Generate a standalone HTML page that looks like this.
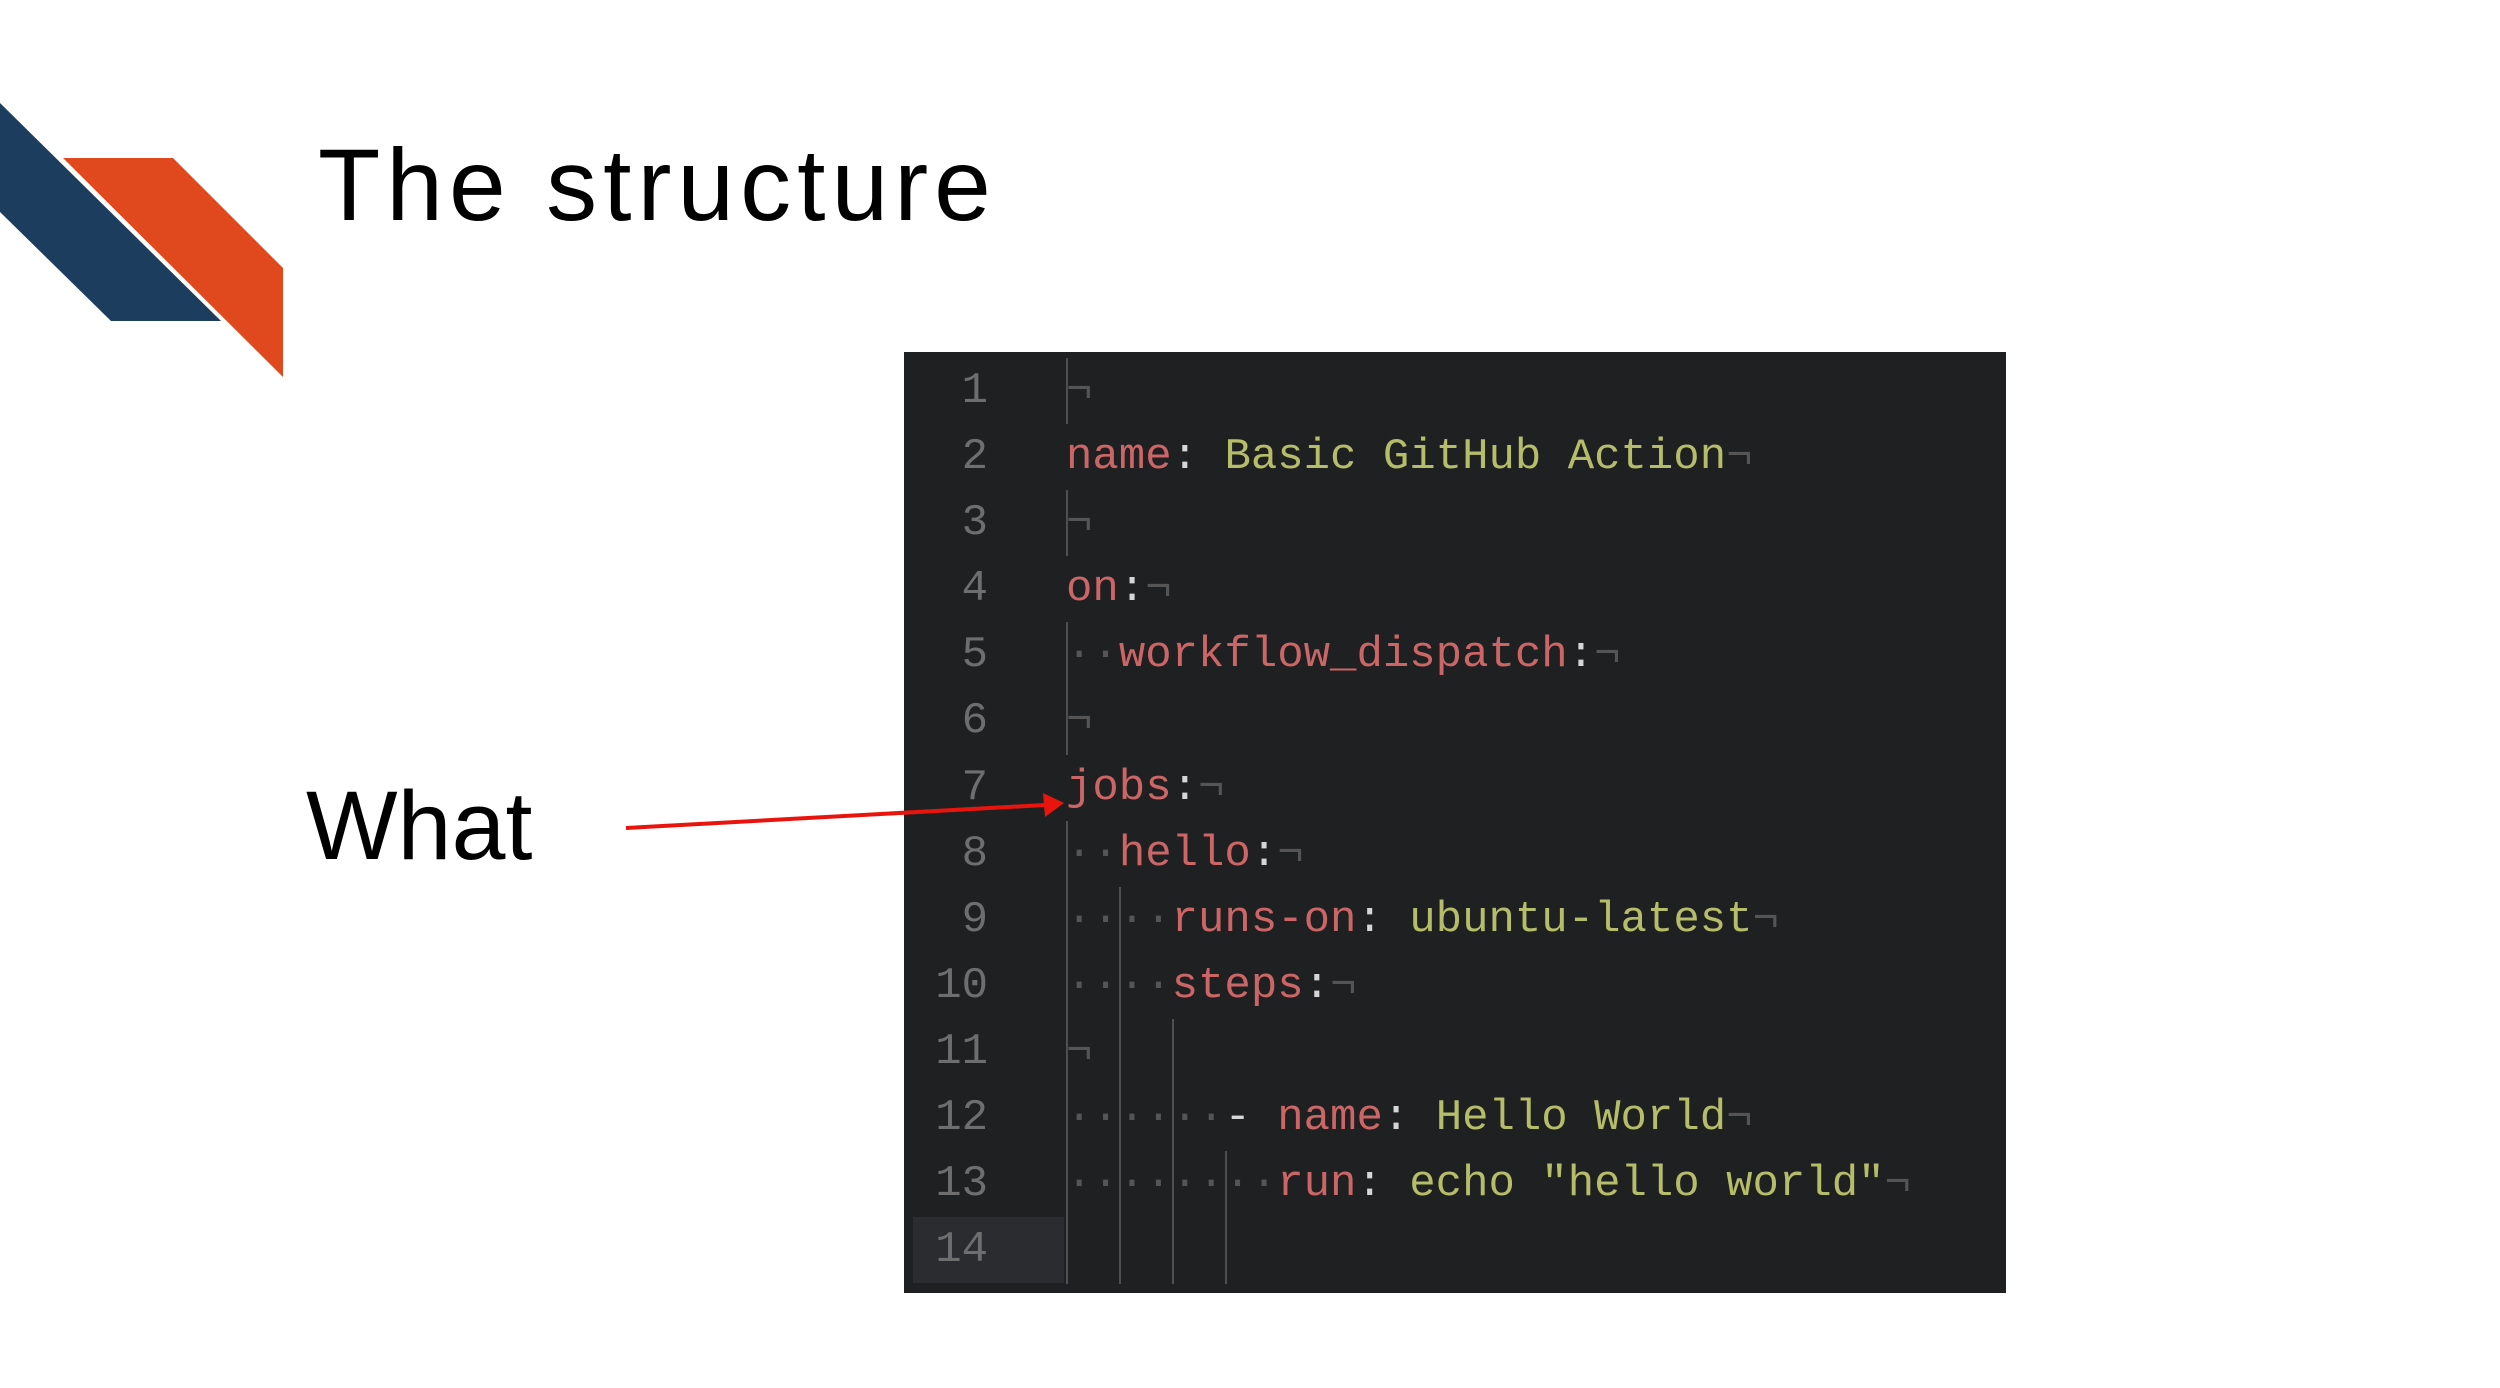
<!DOCTYPE html>
<html><head><meta charset="utf-8"><style>
html,body{margin:0;padding:0;background:#fff;width:2500px;height:1388px;overflow:hidden;position:relative;font-family:"Liberation Sans",sans-serif}
.title{position:absolute;left:318px;top:124px;font-size:102px;letter-spacing:6px;color:#000;line-height:1.2;white-space:nowrap}
.what{position:absolute;left:306px;top:768px;font-size:97px;color:#000;line-height:1.2}
.box{position:absolute;left:904px;top:352px;width:1102px;height:941px;background:#1f2022}
.hl{position:absolute;left:913px;top:1217px;width:151px;height:66px;background:#2b2c2f}
.ln{position:absolute;left:900px;width:88px;text-align:right;font-family:"Liberation Mono",monospace;font-size:44px;line-height:66.1px;color:#6e6e6e}
.cl{position:absolute;left:1066px;font-family:"Liberation Mono",monospace;font-size:44px;line-height:66.1px;color:#d6d6d6;white-space:pre}
.k{color:#cc6666}.v{color:#b5bd68}.d{color:#555}.p{color:#555}
.g{position:absolute;width:2px;background:#4f4f4f}
</style></head><body>
<svg width="300" height="400" style="position:absolute;left:0;top:0">
<polygon points="0,103 221,321 111,321 0,212" fill="#1d3d5f"/>
<polygon points="63,158 173,158 283,268 283,377" fill="#e0491e"/>
</svg>
<div class="title">The structure</div>
<div class="what">What</div>
<div class="box"></div>
<div class="hl"></div>
<div class="ln" style="top:358px">1<br>2<br>3<br>4<br>5<br>6<br>7<br>8<br>9<br>10<br>11<br>12<br>13<br>14</div>
<div class="g" style="left:1066px;top:358px;height:66px"></div>
<div class="g" style="left:1066px;top:490px;height:66px"></div>
<div class="g" style="left:1066px;top:622px;height:133px"></div>
<div class="g" style="left:1066px;top:821px;height:463px"></div>
<div class="g" style="left:1119px;top:887px;height:397px"></div>
<div class="g" style="left:1172px;top:1019px;height:265px"></div>
<div class="g" style="left:1225px;top:1151px;height:133px"></div>
<div class="cl" style="top:358px"><span class="p">¬</span>
<span class="k">name</span>: <span class="v">Basic GitHub Action</span><span class="p">¬</span>
<span class="p">¬</span>
<span class="k">on</span>:<span class="p">¬</span>
<span class="d">··</span><span class="k">workflow_dispatch</span>:<span class="p">¬</span>
<span class="p">¬</span>
<span class="k">jobs</span>:<span class="p">¬</span>
<span class="d">··</span><span class="k">hello</span>:<span class="p">¬</span>
<span class="d">····</span><span class="k">runs-on</span>: <span class="v">ubuntu-latest</span><span class="p">¬</span>
<span class="d">····</span><span class="k">steps</span>:<span class="p">¬</span>
<span class="p">¬</span>
<span class="d">······</span>- <span class="k">name</span>: <span class="v">Hello World</span><span class="p">¬</span>
<span class="d">········</span><span class="k">run</span>: <span class="v">echo "hello world"</span><span class="p">¬</span>
</div>
<svg width="2500" height="1388" style="position:absolute;left:0;top:0">
<line x1="626" y1="828" x2="1045" y2="805" stroke="#e8150f" stroke-width="4"/>
<polygon points="1064,803 1043,793 1045,817" fill="#e8150f"/>
</svg>
</body></html>
